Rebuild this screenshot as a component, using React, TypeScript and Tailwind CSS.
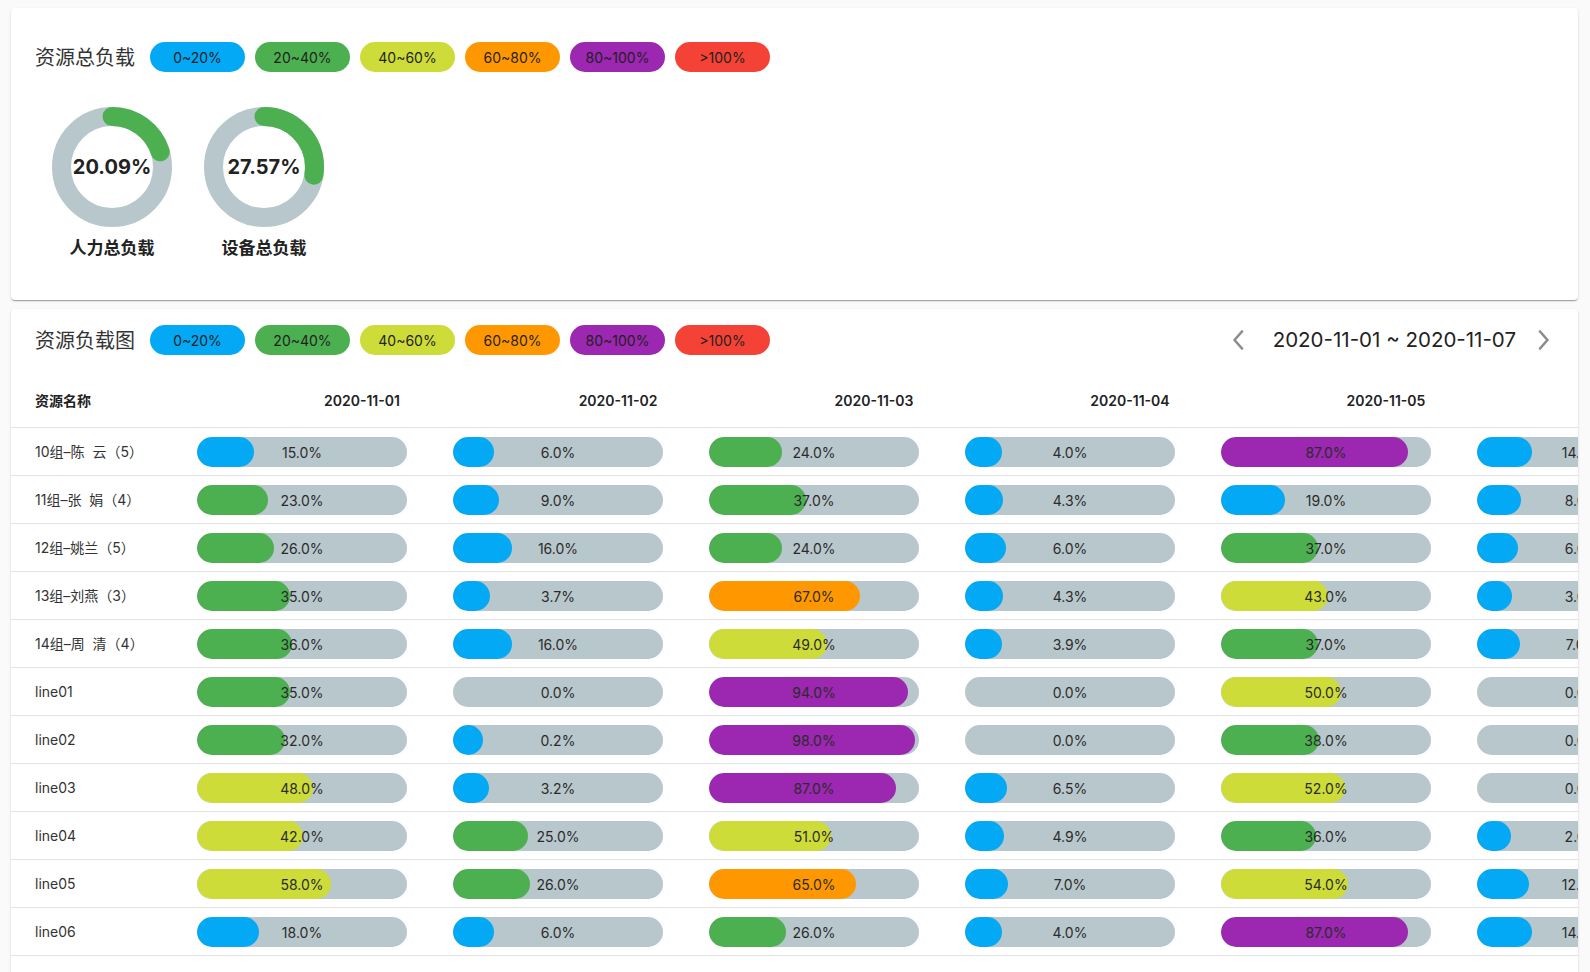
import React from "react";

const LEGEND = [
  { label: "0~20%", cls: "bg-[#03a9f4]" },
  { label: "20~40%", cls: "bg-[#4caf50]" },
  { label: "40~60%", cls: "bg-[#cddc39]" },
  { label: "60~80%", cls: "bg-[#ff9800]" },
  { label: "80~100%", cls: "bg-[#9c27b0]" },
  { label: ">100%", cls: "bg-[#f44336]" },
];

function fillClass(p: number): string {
  if (p < 20) return "bg-[#03a9f4]";
  if (p < 40) return "bg-[#4caf50]";
  if (p < 60) return "bg-[#cddc39]";
  if (p < 80) return "bg-[#ff9800]";
  if (p <= 100) return "bg-[#9c27b0]";
  return "bg-[#f44336]";
}

const DATES = [
  "2020-11-01",
  "2020-11-02",
  "2020-11-03",
  "2020-11-04",
  "2020-11-05",
  "2020-11-06",
  "2020-11-07",
];

const ROWS: { name: string; values: number[] }[] = [
  { name: "10组–陈  云（5）", values: [15.0, 6.0, 24.0, 4.0, 87.0, 14.0, 10.0] },
  { name: "11组–张  娟（4）", values: [23.0, 9.0, 37.0, 4.3, 19.0, 8.0, 5.0] },
  { name: "12组–姚兰（5）", values: [26.0, 16.0, 24.0, 6.0, 37.0, 6.0, 4.0] },
  { name: "13组–刘燕（3）", values: [35.0, 3.7, 67.0, 4.3, 43.0, 3.0, 2.0] },
  { name: "14组–周  清（4）", values: [36.0, 16.0, 49.0, 3.9, 37.0, 7.0, 6.0] },
  { name: "line01", values: [35.0, 0.0, 94.0, 0.0, 50.0, 0.0, 0.0] },
  { name: "line02", values: [32.0, 0.2, 98.0, 0.0, 38.0, 0.0, 0.0] },
  { name: "line03", values: [48.0, 3.2, 87.0, 6.5, 52.0, 0.0, 0.0] },
  { name: "line04", values: [42.0, 25.0, 51.0, 4.9, 36.0, 2.0, 1.0] },
  { name: "line05", values: [58.0, 26.0, 65.0, 7.0, 54.0, 12.0, 9.0] },
  { name: "line06", values: [18.0, 6.0, 26.0, 4.0, 87.0, 14.0, 11.0] },
];

function Legend() {
  return (
    <div className="flex items-center gap-[10px]">
      {LEGEND.map((l) => (
        <span
          key={l.label}
          className={`${l.cls} w-[95px] h-[30px] rounded-full flex items-center justify-center text-[14px] text-[#1f1f1f]`}
        >
          {l.label}
        </span>
      ))}
    </div>
  );
}

function Donut({ value, label }: { value: number; label: string }) {
  const r = 50.5;
  const c = 2 * Math.PI * r;
  const len = (c * value) / 100;
  return (
    <div className="flex flex-col items-center w-[120px]">
      <div className="relative w-[120px] h-[120px]">
        <svg width="120" height="120" viewBox="0 0 120 120">
          <circle cx="60" cy="60" r={r} fill="none" stroke="#b8c7cc" strokeWidth="19" />
          <circle
            cx="60"
            cy="60"
            r={r}
            fill="none"
            stroke="#4caf50"
            strokeWidth="19"
            strokeLinecap="round"
            strokeDasharray={`${len} ${c}`}
            transform="rotate(-90 60 60)"
          />
        </svg>
        <div className="absolute inset-0 flex items-center justify-center text-[20px] font-bold text-[#222]">
          {value.toFixed(2)}%
        </div>
      </div>
      <div className="mt-[9px] leading-[24px] text-[17px] font-bold text-[#222]">{label}</div>
    </div>
  );
}

function Bar({ value }: { value: number }) {
  const w = value > 0 ? 30 + Math.min(value, 100) * 1.8 : 0;
  return (
    <div className="relative w-[210px] h-[30px] rounded-full bg-[#b8c7cc] overflow-hidden">
      {w > 0 && (
        <div className={`absolute left-0 top-0 h-full rounded-full ${fillClass(value)}`} style={{ width: w }} />
      )}
      <div className="absolute inset-0 flex items-center justify-center pt-[1px] text-[14px] text-[#2b2b2b]">
        {value.toFixed(1)}%
      </div>
    </div>
  );
}

function Chevron({ dir }: { dir: "left" | "right" }) {
  return (
    <svg width="12" height="20" viewBox="0 0 12 20" className="shrink-0">
      <path
        d={dir === "left" ? "M10 1.5 L2.5 10 L10 18.5" : "M2 1.5 L9.5 10 L2 18.5"}
        fill="none"
        stroke="#8c8c8c"
        strokeWidth="2.6"
        strokeLinecap="round"
        strokeLinejoin="round"
      />
    </svg>
  );
}

export default function App() {
  return (
    <div className="h-[972px] overflow-hidden bg-[#fafafa] pt-[8px] pl-[11px] pr-[12px] font-['Inter','Noto_Sans_CJK_SC',sans-serif] text-[#333]">
      <div className="bg-white rounded-[4px] shadow-[0_2px_1px_-1px_rgba(0,0,0,0.2),0_1px_1px_0_rgba(0,0,0,0.14),0_1px_3px_0_rgba(0,0,0,0.12)] pt-[34px] pb-[40px]">
        <div className="flex items-center pl-[24px] h-[30px]">
          <span className="text-[20px] text-[#333] mr-[15px] font-['Noto_Sans_CJK_SC',sans-serif]">资源总负载</span>
          <Legend />
        </div>
        <div className="flex gap-[32px] pl-[41px] mt-[35px]">
          <Donut value={20.09} label="人力总负载" />
          <Donut value={27.57} label="设备总负载" />
        </div>
      </div>

      <div className="mt-[9px] bg-white rounded-[4px] shadow-[0_2px_1px_-1px_rgba(0,0,0,0.2),0_1px_1px_0_rgba(0,0,0,0.14),0_1px_3px_0_rgba(0,0,0,0.12)] pt-[16px] pb-[24px] overflow-hidden">
        <div className="flex items-center pl-[24px] pr-[28px] h-[30px]">
          <span className="text-[20px] text-[#333] mr-[15px] font-['Noto_Sans_CJK_SC',sans-serif]">资源负载图</span>
          <Legend />
          <div className="ml-auto flex items-center">
            <Chevron dir="left" />
            <span className="ml-[29px] mr-[22px] text-[20.5px] text-[#222]">2020-11-01 ~ 2020-11-07</span>
            <Chevron dir="right" />
          </div>
        </div>

        <div className="mt-[18px] overflow-hidden">
          <div className="w-max">
            <div className="flex h-[55px] border-b border-[#e2e2e2] items-center">
              <div className="w-[186px] shrink-0 pl-[24px] text-[14px] font-bold text-[#222]">资源名称</div>
              {DATES.map((d) => (
                <div key={d} className="w-[256px] shrink-0 pl-[74px] text-center text-[14px] font-semibold text-[#222]">
                  {d}
                </div>
              ))}
            </div>
            {ROWS.map((row) => (
              <div key={row.name} className="flex h-[48px] border-b border-[#e2e2e2] items-center">
                <div className="w-[186px] shrink-0 pl-[24px] text-[14px] text-[#333] whitespace-pre">{row.name}</div>
                {row.values.map((v, i) => (
                  <div key={i} className="w-[256px] shrink-0">
                    <Bar value={v} />
                  </div>
                ))}
              </div>
            ))}
          </div>
        </div>
      </div>
    </div>
  );
}
